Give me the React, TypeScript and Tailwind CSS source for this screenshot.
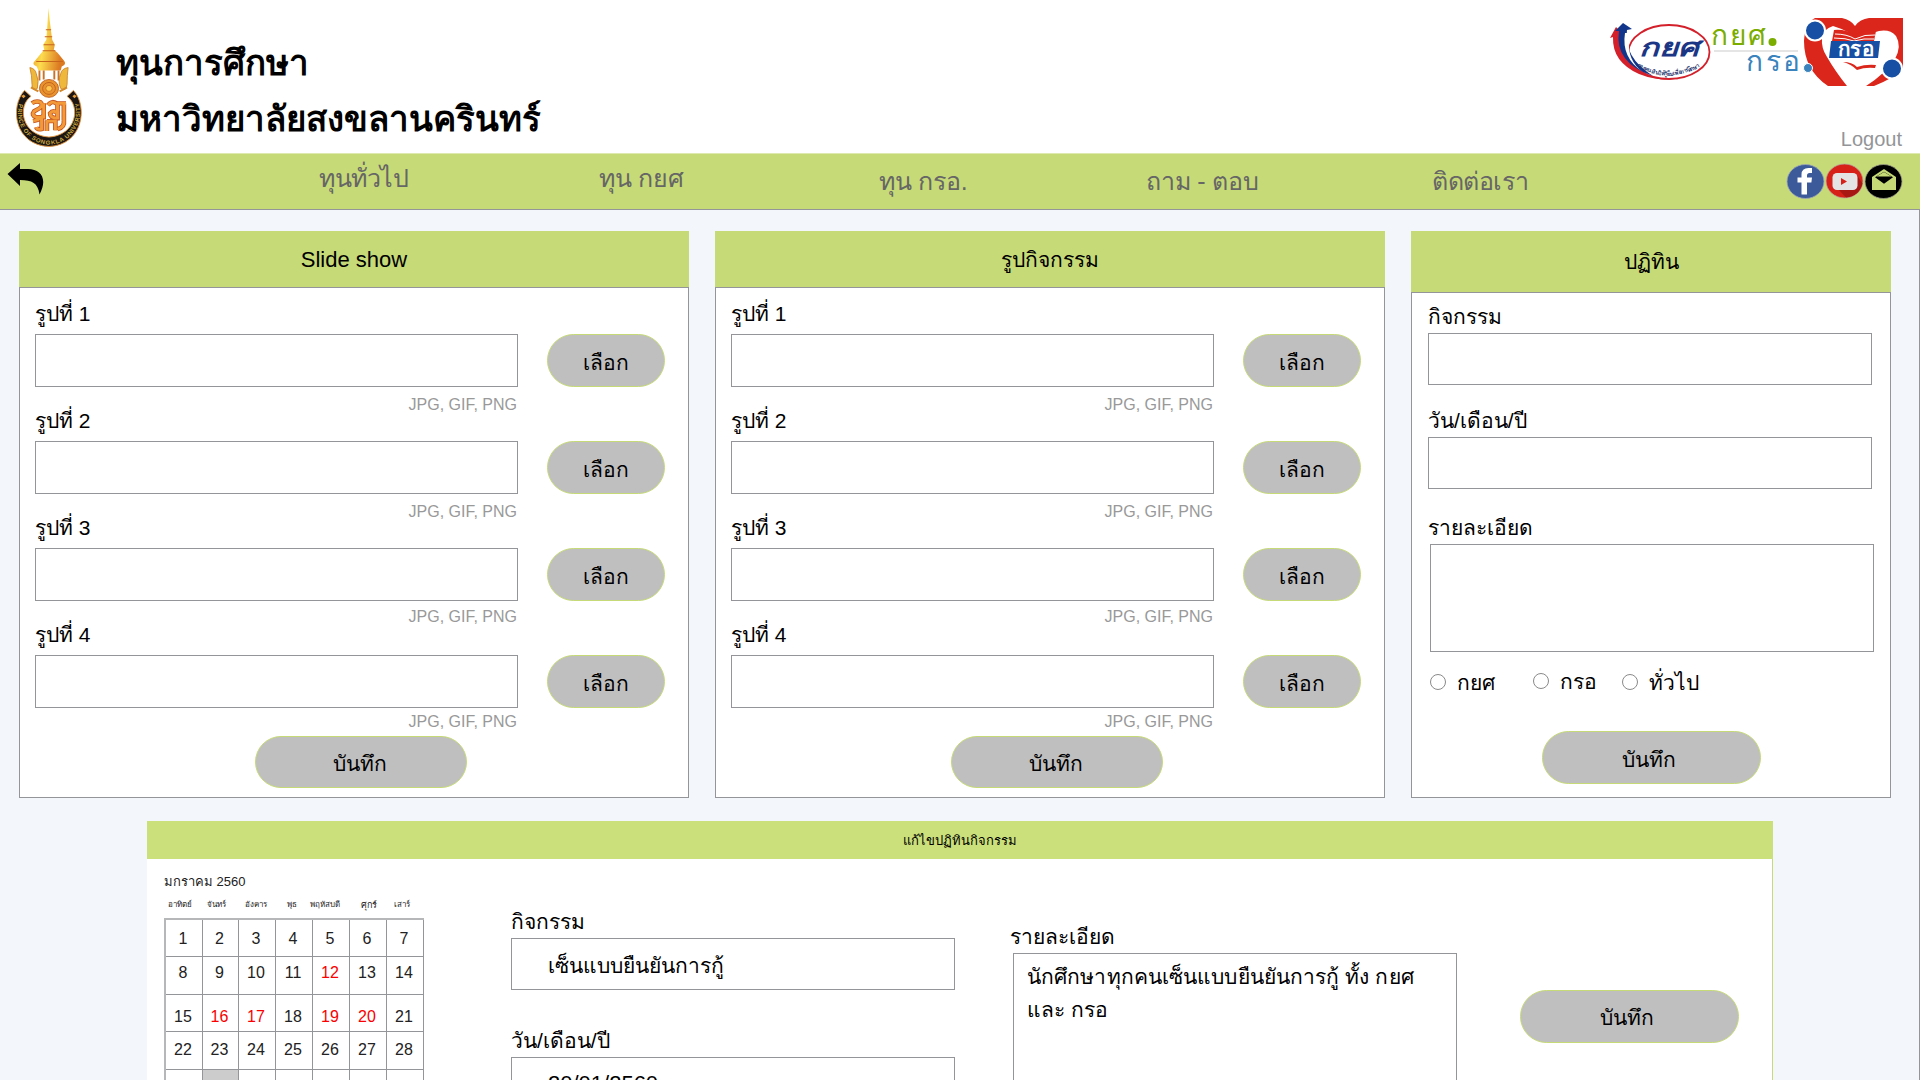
import type { ReactNode } from "react";

const label = "block whitespace-nowrap text-[21px] leading-[32px]";
const box = "block border border-[#939598] bg-white";

function PillButton({ children, className }: { children: ReactNode; className: string }) {
  return (
    <button
      className={`shrink-0 rounded-full border border-[#c6da77] bg-[#bfbfbf] text-center text-[21px] whitespace-nowrap ${className}`}
    >
      {children}
    </button>
  );
}

function UniversityEmblem() {
  return (
    <svg width="68" height="141" viewBox="14 7 64 142" preserveAspectRatio="none">
      <defs>
        <linearGradient id="gold" x1="0" x2="1" y1="0" y2="0.3">
          <stop offset="0" stopColor="#e58a1f" />
          <stop offset="0.45" stopColor="#fddc4e" />
          <stop offset="1" stopColor="#dc7a22" />
        </linearGradient>
        <path id="ring" d="M21 101 C13 122 27 143.500 46 143.500 C65 143.500 79 122 71 99" />
      </defs>
      <path
        d="M45.500 8 L46.600 20 L48 32 L49 40 L51.500 45 L50.500 50 L54 53 L60 61 Q63 65 58 67 L57 71 H36 L34.500 67 Q29 65 33 61 L39 53 L41.500 50 L40.500 45 L43.500 40 L44 32 L44.800 20Z"
        fill="url(#gold)"
      />
      <path d="M43 30h5M42 37h7M41 45h10M40 51h12M34 62h25" stroke="#c8641c" strokeWidth="1" />
      <path d="M37 71v10M41 71v9M51 71v9M55 71v10" stroke="#c97326" strokeWidth="1.800" />
      <path
        d="M28 68q5 1 6 6q3 8 1 15q-5 4-5-4q0-9-2-17zM64 68q-6 1-7 6q-3 8 0 15q5 4 6-4q0-9 1-17z"
        fill="#edb83c"
        stroke="#c98029"
        strokeWidth="0.800"
      />
      <path d="M29 88l7 4M63 88l-7 4" stroke="#d2892c" strokeWidth="2" />
      <path
        d="M23 91 L29 97 C16 107 20 136 46 138 C72 136 76 107 63 97 L69 91 C83 107 78 146 46 147.500 C13 146 9 107 23 91Z"
        fill="#1d1714"
        stroke="#e2953e"
        strokeWidth="0.900"
      />
      <circle cx="46" cy="89" r="9" fill="#e9932f" stroke="#b9591b" strokeWidth="0.800" />
      <circle cx="46" cy="89" r="6" fill="none" stroke="#b9591b" strokeWidth="0.800" />
      <circle cx="46" cy="89" r="3" fill="#ffc74d" stroke="#b9591b" strokeWidth="0.600" />
      <path
        d="M30 104q4-3 8-1q3 3-1 6l-5 3q-3 4 2 6h7v-14M45 106q4-6 9-1v14q-7 0-7-5q3-4 7 0M54 104h8M60 104v17M31 122q5-1 8-4v12q-4 1-5-2M44 121v11M44 122h8v9M60 121q1 7-6 9"
        fill="none"
        stroke="#c4531d"
        strokeWidth="4.400"
      />
      <path
        d="M30 104q4-3 8-1q3 3-1 6l-5 3q-3 4 2 6h7v-14M45 106q4-6 9-1v14q-7 0-7-5q3-4 7 0M54 104h8M60 104v17M31 122q5-1 8-4v12q-4 1-5-2M44 121v11M44 122h8v9M60 121q1 7-6 9"
        fill="none"
        stroke="#f2993a"
        strokeWidth="2.800"
      />
      <path d="M22 95l2 2-2 2-2-2zM70 95l2 2-2 2-2-2z" fill="#e79e3f" />
      <text className="font-['Liberation_Sans',sans-serif] font-bold" fontSize="5.800" fill="#c9a63f" textLength="108" dy="2">
        <textPath href="#ring" startOffset="4">
          PRINCE OF SONGKLA UNIVERSITY
        </textPath>
      </text>
    </svg>
  );
}

function FundLogos() {
  return (
    <svg width="294" height="70" viewBox="1609 17 294 70" className="font-['Liberation_Sans',sans-serif]">
      <defs>
        <clipPath id="heartClip">
          <rect x="1800" y="18" width="103" height="68" />
        </clipPath>
        <path id="motto" d="M1637 66 Q1668 86 1704 64" />
      </defs>
      <ellipse cx="1669" cy="52" rx="40.500" ry="27" fill="#fff" stroke="#d3202b" strokeWidth="1.800" />
      <path d="M1610 38l6-11 7 7-3 1q-1 26 29 40q16 6 32 4q-22 3-42-5q-27-12-26-37z" fill="#d3202b" />
      <path d="M1615 31l8-8 9 6-5 1q-4 27 26 46q-39-13-34-45z" fill="#12358c" />
      <path d="M1629 33v6q-2 22 14 33q-22-14-18-39z" fill="#fff" />
      <text x="1639" y="56" fontSize="25" fill="#1b3685" textLength="60" lengthAdjust="spacingAndGlyphs" className="font-bold italic">
        กยศ
      </text>
      <text fontSize="5.500" fill="#27366e" textLength="66" className="font-bold">
        <textPath href="#motto">กองทุนเงินให้กู้ยืมเพื่อการศึกษา</textPath>
      </text>
      <text x="1711" y="45" fontSize="28" fill="#7aad00" textLength="55">
        กยศ
      </text>
      <circle cx="1772.500" cy="42" r="4" fill="#7aad00" />
      <path d="M1714 51h84" stroke="#dcdcdc" strokeWidth="1.500" />
      <text x="1746" y="71" fontSize="28" fill="#3a83bd" textLength="54">
        กรอ
      </text>
      <g clipPath="url(#heartClip)">
        <path
          d="M1815 18h27q9 2 13 8q5-7 14-8h34v51q-9 9-29 17h-8l-38 0q-24-16-24-45q1-18 11-23z"
          fill="#db261b"
        />
        <path
          d="M1833 26q-10 3-11 12q-1 10 5 19q8 14 20 29h19q19-12 29-27q7-13 1-23q-6-7-17-5q-10 2-19 10q-10-10-27-15z"
          fill="#fff"
        />
        <path d="M1903 68q-8 12-23 18h23z" fill="#fff" />
      </g>
      <circle cx="1808" cy="68" r="4.500" fill="#3a83bd" stroke="#fff" />
      <path d="M1834 30q12-1 20 5q10-6 22-4l-2 10h-42z" fill="#db261b" />
      <path d="M1835 34q12 0 20 5q10-5 20-4M1834 38q12 0 20 3q10-3 20-2" stroke="#fff" fill="none" />
      <path d="M1831 41h49l-2 17h-49z" fill="#164fa3" />
      <text x="1838" y="56" fontSize="20" fill="#fff" textLength="36" lengthAdjust="spacingAndGlyphs" className="font-bold">
        กรอ
      </text>
      <path d="M1843 62q9 0 14 5q9-3 19-2l-1 3q-10-1-18 2q-6-6-14-8z" fill="#db261b" />
      <circle cx="1815" cy="30.500" r="10" fill="#164fa3" stroke="#fff" strokeWidth="2" />
      <circle cx="1892" cy="68.500" r="10" fill="#164fa3" stroke="#fff" strokeWidth="2" />
    </svg>
  );
}

function SocialIcons() {
  return (
    <svg width="117" height="37" viewBox="0 0 117 37">
      <ellipse cx="19.500" cy="18.500" rx="18.500" ry="17" fill="#3c5a9a" stroke="#9fa8b8" strokeWidth="0.800" />
      <path d="M15.500 31.500v-12h-4v-5h4v-3q0-6.500 7-6.500h3.500v5h-2.500q-2.500 0-2.500 2.500v2h5l-.6 5h-4.400v12z" fill="#fff" />
      <ellipse cx="58.500" cy="18" rx="18.500" ry="17" fill="#d62018" stroke="#b9a9a0" strokeWidth="0.800" />
      <path d="M52 26l8 8.500q13-1 16.500-14l-6-9z" fill="#a81713" />
      <rect x="46.500" y="10" width="25" height="17" rx="4.500" fill="#e4e4e4" />
      <path d="M55 15v7l6-3.500z" fill="#d62018" />
      <ellipse cx="97.500" cy="18.500" rx="18.500" ry="17" fill="#000" stroke="#9fa08c" strokeWidth="0.800" />
      <path d="M86 14l12-8 12 8v13h-24z" fill="#c6da77" />
      <path d="M89 14.200h18l-9 6.500zM89 14.200l9-5.500 9 5.500z" fill="#000" />
      <path d="M90.500 13.500l7.500-4.500 7.500 4.500z" fill="#c6da77" />
    </svg>
  );
}

const uploads = [
  { title: "รูปที่ 1", hint: "mt-[6px]" },
  { title: "รูปที่ 2", hint: "mt-[6px]" },
  { title: "รูปที่ 3", hint: "mt-[4px]" },
  { title: "รูปที่ 4", hint: "mt-[2px]" },
];

function UploadCard({ title, className }: { title: string; className: string }) {
  return (
    <section className={`h-[567px] shrink-0 ${className}`}>
      <h2 className="h-[56px] bg-[#c6da77] text-center leading-[57px]">{title}</h2>
      <div className="h-[511px] border border-[#939598] bg-white pl-[15px]">
        {uploads.map((u) => (
          <div key={u.title} className="h-[107px] pt-[10px]">
            <span className={label}>{u.title}</span>
            <div className="mt-1 flex gap-[29px]">
              <div className="w-[483px]">
                <input className={`${box} h-[53px] w-[483px]`} />
                <p className={`pr-px text-right text-[16px] leading-[24px] text-[#999] ${u.hint}`}>JPG, GIF, PNG</p>
              </div>
              <PillButton className="h-[53px] w-[118px] pt-[4px] leading-[48px]">เลือก</PillButton>
            </div>
          </div>
        ))}
        <PillButton className="mt-5 ml-[220px] h-[52px] w-[212px] pt-[4px] pr-[2px] leading-[46px]">บันทึก</PillButton>
      </div>
    </section>
  );
}

function Radio({ text, className }: { text: string; className: string }) {
  return (
    <label className={`flex items-start gap-[11px] ${className}`}>
      <span className="mt-[7px] size-4 rounded-full border border-[#8a8a8a] bg-white" />
      <span className="text-[21px] leading-[32px] whitespace-nowrap">{text}</span>
    </label>
  );
}

const weekdays = [
  { t: "อาทิตย์", c: "w-[31px] text-[8px]" },
  { t: "จันทร์", c: "w-[43px] text-[8px]" },
  { t: "อังคาร", c: "w-[36px] text-[8px]" },
  { t: "พุธ", c: "w-[36px] text-[8px]" },
  { t: "พฤหัสบดี", c: "w-[30px] text-[8px]" },
  { t: "ศุกร์", c: "w-[58px] text-[9px]" },
  { t: "เสาร์", c: "w-[8px] text-[8px]" },
];

const weeks = [
  { h: "h-[37px] leading-[37px]", days: [1, 2, 3, 4, 5, 6, 7] },
  { h: "h-[38px] leading-[32px]", days: [8, 9, 10, 11, 12, 13, 14] },
  { h: "h-[37px] leading-[43px]", days: [15, 16, 17, 18, 19, 20, 21] },
  { h: "h-[38px] leading-[36px]", days: [22, 23, 24, 25, 26, 27, 28] },
];
const holidays = [12, 16, 17, 19, 20];
const columns = "grid grid-cols-[37px_36px_37px_37px_37px_37px_37px]";

function Calendar() {
  return (
    <div className="ml-[17px] w-[260px] shrink-0 pt-3 text-[#222]">
      <p className="text-[13px] leading-[21px]">มกราคม 2560</p>
      <div className="mt-[5px] flex h-[16px] leading-[16px]">
        {weekdays.map((d) => (
          <span key={d.t} className={`flex shrink-0 justify-center whitespace-nowrap ${d.c}`}>
            {d.t}
          </span>
        ))}
      </div>
      <div className="mt-[5px] w-[260px] border-t-2 border-l-2 border-[#b5b7b8]">
        {weeks.map((w) => (
          <div key={w.days[0]} className={`${columns} ${w.h}`}>
            {w.days.map((d) => (
              <span
                key={d}
                className={`overflow-hidden border-r border-b border-[#939598] pr-[2px] text-center text-[16px] ${
                  holidays.includes(d) ? "text-[#fa0000]" : ""
                }`}
              >
                {d}
              </span>
            ))}
          </div>
        ))}
        <div className={`${columns} h-[37px]`}>
          {[0, 1, 2, 3, 4, 5, 6].map((d) => (
            <span key={d} className={`border-r border-[#939598] ${d === 1 ? "bg-[#ccc]" : ""}`} />
          ))}
        </div>
      </div>
    </div>
  );
}

export default function App() {
  return (
    <div className="h-[1080px] w-[1920px] overflow-hidden bg-white font-['Liberation_Sans',sans-serif] text-black">
      <header className="flex h-[153px] justify-between">
        <div className="flex">
          <div className="ml-[15px] mt-[7px]">
            <UniversityEmblem />
          </div>
          <h1 className="ml-[33px] mt-[35px] text-[34.8px] leading-[56px] font-bold whitespace-nowrap">
            ทุนการศึกษา
            <br />
            มหาวิทยาลัยสงขลานครินทร์
          </h1>
        </div>
        <div className="mr-[17px] flex flex-col items-end pt-[17px]">
          <FundLogos />
          <a className="mt-[40px] mr-px text-[20px] leading-[24px] text-[#939598]">Logout</a>
        </div>
      </header>

      <nav className="flex h-[57px] border-t border-b border-t-[#dde9ae] border-b-[#939598] bg-[#c6da77] text-[25px] tracking-[-0.2px] whitespace-nowrap text-[#666]">
        <div className="w-[319px] pt-[9px] pl-[7px]">
          <svg width="37" height="33" viewBox="0 0 37 33">
            <path d="M0.500 11L13 0v6h8c13 0 20 10 11.500 25.500C31 20 25 17 13 17v6z" fill="#000" />
          </svg>
        </div>
        <a className="w-[280px] leading-[48px] tracking-[-0.4px]">ทุนทั่วไป</a>
        <a className="w-[280px] leading-[48px]">ทุน กยศ</a>
        <a className="w-[267px] leading-[54px]">ทุน กรอ.</a>
        <a className="w-[286px] leading-[54px]">ถาม - ตอบ</a>
        <a className="w-[354px] leading-[54px] tracking-[-0.4px]">ติดต่อเรา</a>
        <div className="pt-[9px]">
          <SocialIcons />
        </div>
      </nav>

      <main className="h-[870px] border-r border-[#939598] bg-[#f3f7fb] pt-[21px]">
        <div className="flex pl-[19px]">
          <UploadCard title="Slide show" className="w-[670px] text-[22px]" />
          <UploadCard title="รูปกิจกรรม" className="ml-[26px] w-[670px] text-[21px]" />
          <section className="ml-[26px] h-[567px] w-[480px] shrink-0">
            <h2 className="h-[61px] bg-[#c6da77] text-center text-[21px] leading-[62px]">ปฏิทิน</h2>
            <div className="h-[506px] border border-[#939598] bg-white pt-2 pl-4">
              <span className={label}>กิจกรรม</span>
              <input className={`${box} h-[52px] w-[444px]`} />
              <span className={`${label} mt-5`}>วัน/เดือน/ปี</span>
              <input className={`${box} h-[52px] w-[444px]`} />
              <span className={`${label} mt-[23px]`}>รายละเอียด</span>
              <textarea className={`${box} ml-[2px] h-[108px] w-[444px] resize-none`} />
              <div className="mt-[15px] ml-[2px] flex h-[32px]">
                <Radio text="กยศ" className="w-[103px]" />
                <Radio text="กรอ" className="mt-[-1px] w-[89px]" />
                <Radio text="ทั่วไป" className="" />
              </div>
              <PillButton className="mt-8 ml-[114px] h-[53px] w-[219px] pt-[4px] pr-[6px] leading-[48px]">บันทึก</PillButton>
            </div>
          </section>
        </div>

        <section className="mt-[23px] ml-[147px] w-[1626px]">
          <h2 className="h-[38px] bg-[#cbe07a] text-center text-[13px] leading-[40px]">แก้ไขปฏิทินกิจกรรม</h2>
          <div className="flex h-[300px] border-r border-[#c6da77] bg-white">
            <Calendar />
            <div className="ml-[87px] w-[444px] shrink-0 pt-[47px]">
              <span className={label}>กิจกรรม</span>
              <input className={`${box} h-[52px] w-[444px] pt-[2px] pl-[36px] text-[21px]`} defaultValue="เซ็นแบบยืนยันการกู้" />
              <span className={`${label} mt-[35px]`}>วัน/เดือน/ปี</span>
              <input className={`${box} h-[52px] w-[444px] pt-[2px] pl-[36px] text-[22px]`} defaultValue="20/01/2560" />
            </div>
            <div className="ml-[55px] w-[447px] shrink-0 pt-[62px]">
              <span className={label}>รายละเอียด</span>
              <div className={`${box} ml-[3px] h-[160px] w-[444px] py-[6px] pl-[13px] text-[21px] leading-[33px] tracking-[0.1px] whitespace-nowrap`}>
                นักศึกษาทุกคนเซ็นแบบยืนยันการกู้ ทั้ง กยศ
                <br />
                และ กรอ
              </div>
            </div>
            <PillButton className="mt-[131px] ml-[63px] h-[53px] w-[219px] pt-[3px] pr-[6px] leading-[48px]">บันทึก</PillButton>
          </div>
        </section>
      </main>
    </div>
  );
}
